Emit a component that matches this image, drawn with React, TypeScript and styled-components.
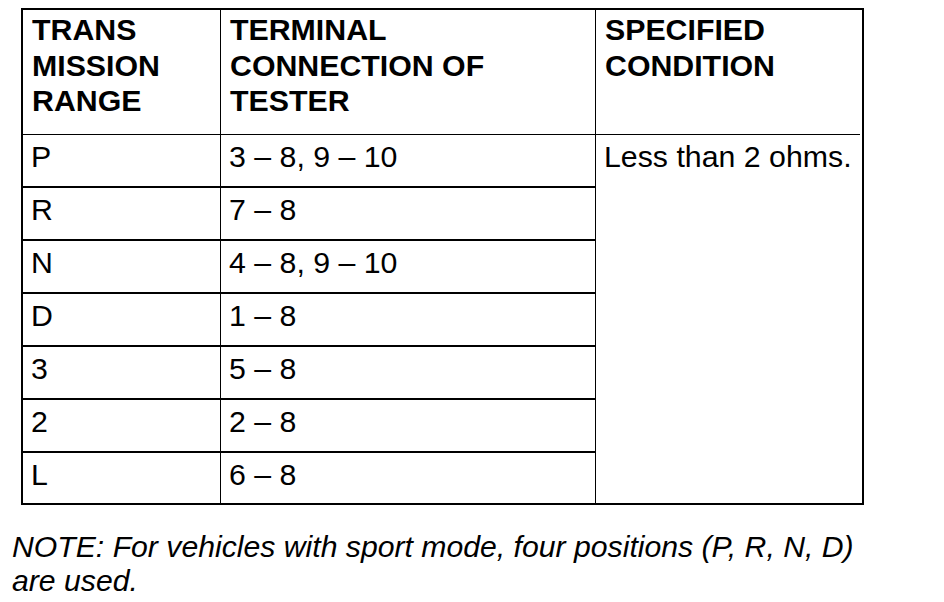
import React from "react";
import styled, { createGlobalStyle } from "styled-components";

const Global = createGlobalStyle`
  html, body { margin: 0; padding: 0; background: #fff; }
  body { font-family: "Liberation Sans", Arial, sans-serif; color: #000; }
`;

const Page = styled.div`
  width: 944px;
  height: 602px;
  padding: 8px 0 0 12px;
  box-sizing: border-box;
  overflow: hidden;
`;

const Grid = styled.div`
  margin-left: 9px;
  width: 843px;
  box-sizing: border-box;
  border: 2px solid #000;
  display: grid;
  grid-template-columns: 198px 375px 264px;
  grid-template-rows: 125px repeat(6, 53px) 50px;
`;

const Cell = styled.div<{ $right?: boolean; $bottom?: 0 | 1 | 2; $head?: boolean }>`
  box-sizing: border-box;
  border-right: ${(p) => (p.$right ? "1px solid #000" : "none")};
  border-bottom: ${(p) => (p.$bottom ? `${p.$bottom}px solid #000` : "none")};
  padding: ${(p) => (p.$head ? "2px 0 0 9px" : "4px 0 0 8px")};
  font-size: 30.3px;
  line-height: 35.5px;
  font-weight: ${(p) => (p.$head ? 700 : 400)};
  white-space: nowrap;
`;

const ConditionCell = styled(Cell)`
  grid-column: 3;
  grid-row: 2 / span 7;
`;

const Note = styled.p`
  margin: 25px 0 0 0;
  font-size: 30.2px;
  line-height: 34px;
  font-style: italic;
`;

const rows: [string, string][] = [
  ["P", "3 – 8, 9 – 10"],
  ["R", "7 – 8"],
  ["N", "4 – 8, 9 – 10"],
  ["D", "1 – 8"],
  ["3", "5 – 8"],
  ["2", "2 – 8"],
  ["L", "6 – 8"],
];

export default function App() {
  return (
    <Page>
      <Global />
      <Grid>
        <Cell $head $right $bottom={1}>
          TRANS
          <br />
          MISSION
          <br />
          RANGE
        </Cell>
        <Cell $head $right $bottom={1}>
          TERMINAL
          <br />
          CONNECTION OF
          <br />
          TESTER
        </Cell>
        <Cell $head $bottom={1}>
          SPECIFIED
          <br />
          CONDITION
        </Cell>
        {rows.map(([range, term], i) => {
          const last = i === rows.length - 1;
          return (
            <React.Fragment key={range}>
              <Cell $right $bottom={last ? 0 : 2} style={{ gridColumn: 1, gridRow: i + 2 }}>
                {range}
              </Cell>
              <Cell $right $bottom={last ? 0 : 2} style={{ gridColumn: 2, gridRow: i + 2 }}>
                {term}
              </Cell>
            </React.Fragment>
          );
        })}
        <ConditionCell>Less than 2 ohms.</ConditionCell>
      </Grid>
      <Note>
        NOTE: For vehicles with sport mode, four positions (P, R, N, D)
        <br />
        are used.
      </Note>
    </Page>
  );
}
